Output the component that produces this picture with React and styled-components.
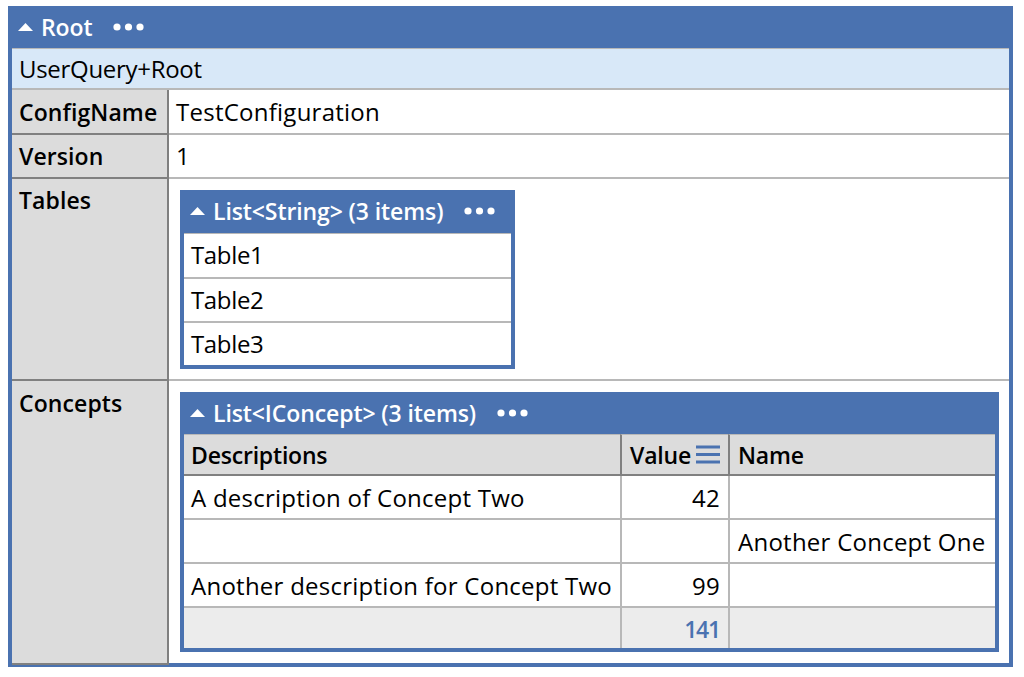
import React from 'react';
import styled, { createGlobalStyle } from 'styled-components';

const blue = '#4a72b0';
const Global = createGlobalStyle`
  html, body { margin: 0; padding: 0; background: #fff; }
  body { font-family: "Open Sans", "Noto Sans", "Liberation Sans", sans-serif; font-size: 24px; letter-spacing: 0.25px; color: #000; width: 1024px; height: 677px; overflow: hidden; }
`;

const Page = styled.div`
  padding: 6px 0 0 8px;
`;
const Panel = styled.div`
  box-sizing: border-box;
  width: ${p => p.$w}px;
  border: ${p => p.$b}px solid ${blue};
  border-top-width: 0;
  background: #fff;
`;
const PanelHeader = styled.div`
  box-sizing: border-box;
  height: ${p => p.$h}px;
  margin: 0 -${p => p.$b}px;
  padding: 0 0 ${p => p.$pb}px ${p => p.$pl}px;
  background: ${blue};
  color: #fff;
  display: flex;
  align-items: center;
  font-size: 23px;
  font-weight: 600;
  white-space: nowrap;
  letter-spacing: -0.1px;
`;
const Caret = styled.svg`
  width: 15px;
  height: 8px;
  margin-right: 8px;
  flex: none;
`;
const Dots = styled.svg`
  width: 31px;
  height: 8px;
  margin-left: 21px;
  flex: none;
`;
const TypeRow = styled.div`
  box-sizing: border-box;
  height: 42px;
  background: #d8e8f8;
  border-top: 1px solid #b8b8b8;
  border-bottom: 2px solid #b8b8b8;
  padding-left: 7px;
  line-height: 40px;
  letter-spacing: -0.3px;
`;
const PropRow = styled.div`
  box-sizing: border-box;
  display: grid;
  grid-template-columns: 157px 1fr;
  height: ${p => p.$h}px;
  border-bottom: ${p => (p.$last ? 0 : 2)}px solid #b8b8b8;
`;
const PropName = styled.div`
  background: #dcdcdc;
  border-right: 2px solid #808080;
  box-shadow: 0 2px 0 #808080;
  padding: ${p => p.$pt}px 0 0 7px;
  font-size: 23px;
  font-weight: 600;
  letter-spacing: 0.1px;
  line-height: 38px;
  white-space: nowrap;
`;
const PropValue = styled.div`
  padding: ${p => p.$pt}px 0 0 7px;
  line-height: 38px;
`;
const NestedValue = styled.div`
  padding: 11px 0 0 11px;
`;
const ListRow = styled.div`
  box-sizing: border-box;
  height: 44px;
  border-top: ${p => (p.$first ? 1 : 2)}px solid #b8b8b8;
  padding-left: 7px;
  line-height: 42px;
  letter-spacing: -0.35px;
`;
const Table = styled.div`
  display: grid;
  grid-template-columns: 436px 108px 1fr;
`;
const Th = styled.div`
  box-sizing: border-box;
  height: 42px;
  background: #dcdcdc;
  border-top: 1px solid #b8b8b8;
  border-bottom: 2px solid #808080;
  border-left: ${p => (p.$first ? 0 : 2)}px solid #808080;
  padding-left: ${p => (p.$first ? 7 : 8)}px;
  display: flex;
  align-items: center;
  font-size: 23px;
  font-weight: 600;
  letter-spacing: -0.2px;
`;
const Td = styled.div`
  box-sizing: border-box;
  height: 44px;
  border-bottom: 2px solid #b8b8b8;
  border-left: ${p => (p.$first ? 0 : 2)}px solid #b8b8b8;
  padding: 0 8px 0 ${p => (p.$first ? 7 : 8)}px;
  line-height: 44px;
  text-align: ${p => (p.$num ? 'right' : 'left')};
  white-space: nowrap;
`;
const Total = styled.div`
  box-sizing: border-box;
  height: 40px;
  background: #ececec;
  border-left: ${p => (p.$first ? 0 : 2)}px solid #b8b8b8;
  padding-right: 8px;
  line-height: 42px;
  text-align: right;
  color: ${blue};
  font-size: 23px;
  font-weight: 600;
  letter-spacing: -1.2px;
`;
const SortIcon = styled.svg`
  width: 24px;
  height: 19px;
  margin-left: 5px;
  flex: none;
`;

const Head = ({ children, h = 43, pb = 0, b = 4, pl = 10 }) => (
  <PanelHeader $h={h} $pb={pb} $b={b} $pl={pl}>
    <Caret viewBox="0 0 15 8"><path d="M0 8 L7.5 0 L15 8 Z" fill="#fff" /></Caret>
    <span>{children}</span>
    <Dots viewBox="0 0 31 8">
      <circle cx="4" cy="4" r="3.6" fill="#fff" />
      <circle cx="15.5" cy="4" r="3.6" fill="#fff" />
      <circle cx="27" cy="4" r="3.6" fill="#fff" />
    </Dots>
  </PanelHeader>
);

export default function App() {
  return (
    <Page>
      <Global />
      <Panel $w={1005} $b={4}>
        <Head h={42}>Root</Head>
        <TypeRow>UserQuery+Root</TypeRow>
        <PropRow $h={45}><PropName $pt={3}>ConfigName</PropName><PropValue $pt={3}>TestConfiguration</PropValue></PropRow>
        <PropRow $h={44}><PropName $pt={2}>Version</PropName><PropValue $pt={2}>1</PropValue></PropRow>
        <PropRow $h={202}>
          <PropName $pt={2}>Tables</PropName>
          <NestedValue>
            <Panel $w={335} $b={4}>
              <Head pb={2}>List&lt;String&gt; (3 items)</Head>
              <ListRow $first>Table1</ListRow>
              <ListRow>Table2</ListRow>
              <ListRow>Table3</ListRow>
            </Panel>
          </NestedValue>
        </PropRow>
        <PropRow $h={282} $last>
          <PropName $pt={3}>Concepts</PropName>
          <NestedValue>
            <Panel $w={819} $b={4}>
              <Head h={42}>List&lt;IConcept&gt; (3 items)</Head>
              <Table>
                <Th $first>Descriptions</Th>
                <Th>Value<SortIcon viewBox="0 0 24 19"><path d="M0 2h24M0 9.5h24M0 17h24" stroke={blue} strokeWidth="2.8" /></SortIcon></Th>
                <Th>Name</Th>
                <Td $first>A description of Concept Two</Td><Td $num>42</Td><Td />
                <Td $first /><Td $num /><Td>Another Concept One</Td>
                <Td $first>Another description for Concept Two</Td><Td $num>99</Td><Td />
                <Total $first /><Total>141</Total><Total />
              </Table>
            </Panel>
          </NestedValue>
        </PropRow>
      </Panel>
    </Page>
  );
}
